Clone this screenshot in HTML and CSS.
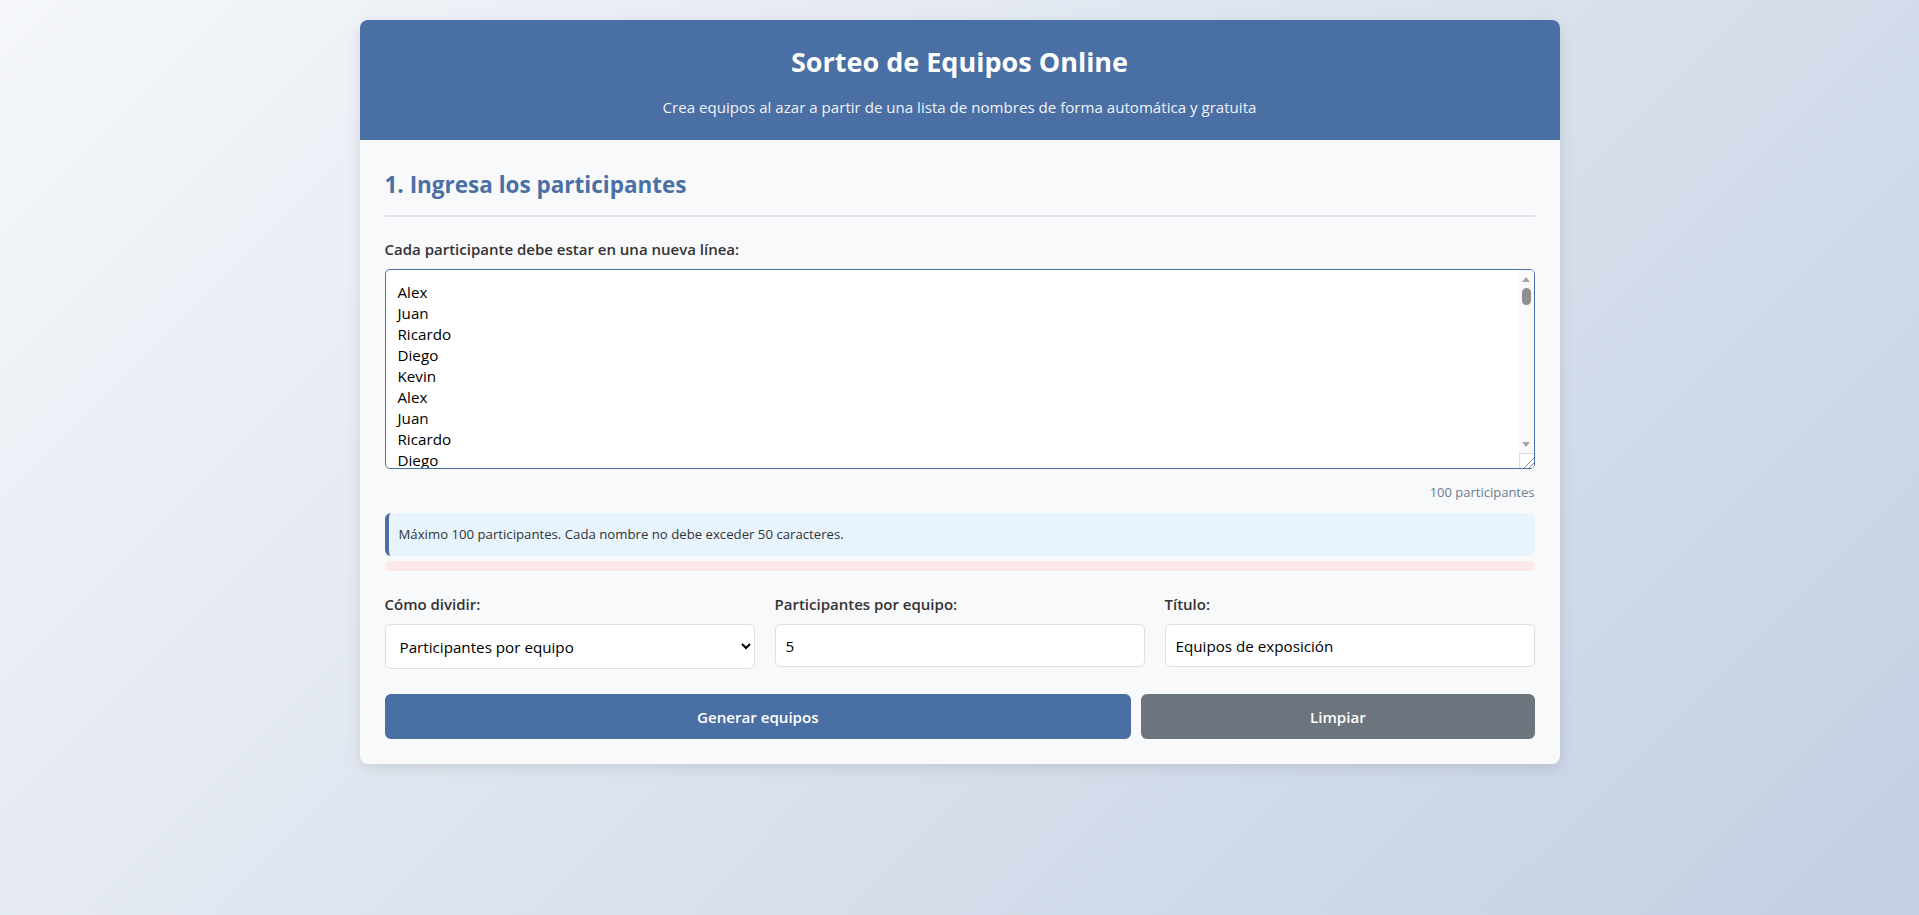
FILE: index.html
```html
<!DOCTYPE html>
<html lang="es">
<head>
<meta charset="utf-8">
<title>Sorteo de Equipos Online</title>
<link rel="stylesheet" href="styles.css">
</head>
<body>
<div class="container">
  <header class="header">
    <h1 class="title">Sorteo de Equipos Online</h1>
    <p class="subtitle">Crea equipos al azar a partir de una lista de nombres de forma automática y gratuita</p>
  </header>
  <main class="main">
    <h2 class="section-title">1. Ingresa los participantes</h2>
    <label class="field-label" for="names">Cada participante debe estar en una nueva línea:</label>
    <div class="names-wrap">
    <textarea id="names" class="names">Alex
Juan
Ricardo
Diego
Kevin
Alex
Juan
Ricardo
Diego
Kevin
Alex
Juan
Ricardo
Diego
Kevin
Alex
Juan
Ricardo
Diego
Kevin
Alex
Juan
Ricardo
Diego
Kevin
Alex
Juan
Ricardo
Diego
Kevin
Alex
Juan
Ricardo
Diego
Kevin
Alex
Juan
Ricardo
Diego
Kevin
Alex
Juan
Ricardo
Diego
Kevin
Alex
Juan
Ricardo
Diego
Kevin
Alex
Juan
Ricardo
Diego
Kevin
Alex
Juan
Ricardo
Diego
Kevin
Alex
Juan
Ricardo
Diego
Kevin
Alex
Juan
Ricardo
Diego
Kevin
Alex
Juan
Ricardo
Diego
Kevin
Alex
Juan
Ricardo
Diego
Kevin
Alex
Juan
Ricardo
Diego
Kevin
Alex
Juan
Ricardo
Diego
Kevin
Alex
Juan
Ricardo
Diego
Kevin
Alex
Juan
Ricardo
Diego
Kevin</textarea>
      <div class="scrollbar" aria-hidden="true">
        <div class="sb-btn"><span class="sb-arrow-up"></span></div>
        <div class="sb-thumb"></div>
        <div class="sb-space"></div>
        <div class="sb-btn"><span class="sb-arrow-down"></span></div>
        <div class="sb-corner"></div>
      </div>
    </div>
    <div class="count">100 participantes</div>
    <div class="info">Máximo 100 participantes. Cada nombre no debe exceder 50 caracteres.</div>
    <div class="error"></div>
    <div class="options">
      <div class="option">
        <label class="field-label" for="mode">Cómo dividir:</label>
        <select id="mode" class="control select">
          <option>Participantes por equipo</option>
          <option>Número de equipos</option>
        </select>
      </div>
      <div class="option">
        <label class="field-label" for="per">Participantes por equipo:</label>
        <input id="per" class="control" type="text" value="5">
      </div>
      <div class="option">
        <label class="field-label" for="ttl">Título:</label>
        <input id="ttl" class="control" type="text" value="Equipos de exposición">
      </div>
    </div>
    <div class="actions">
      <button class="btn btn-primary" type="button">Generar equipos</button>
      <button class="btn btn-secondary" type="button">Limpiar</button>
    </div>
  </main>
</div>
</body>
</html>
```
FILE: styles.css
```css
* { box-sizing: border-box; }

html, body { margin: 0; }

body {
  min-height: 100vh;
  padding: 20px;
  background: linear-gradient(135deg, #f5f7fa 0%, #c3cfe2 100%);
  font-family: "Open Sans", "Noto Sans", sans-serif;
  color: #333;
}

.container {
  max-width: 1200px;
  margin: 0 auto;
  background: #f8f9fa;
  border-radius: 8px;
  box-shadow: 0 4px 14px rgba(0, 0, 0, 0.1);
  overflow: hidden;
}

.header {
  background: #4a6fa5;
  color: #fff;
  text-align: center;
  height: 120px;
  padding: 23px 20px 0;
}

.title {
  margin: 0;
  font-size: 27px;
  line-height: 38px;
  font-weight: 700;
}

.subtitle {
  margin: 14px 0 0;
  font-size: 15.1px;
  line-height: 24px;
  opacity: 0.92;
}

.main {
  padding: 30px 25px 25px;
}

.section-title {
  margin: 0 0 22px;
  padding-bottom: 15px;
  border-bottom: 2px solid #dfe2e6;
  color: #4a6fa5;
  font-size: 22.5px;
  line-height: 30px;
  font-weight: 700;
}

.field-label {
  display: block;
  margin-bottom: 9px;
  font-size: 15px;
  line-height: 21px;
  font-weight: 600;
  color: #333;
}

.names-wrap {
  position: relative;
}

.names {
  display: block;
  width: 100%;
  height: 200px;
  padding: 12px 28px 12px 12px;
  border: 1px solid #4a6fa5;
  border-radius: 5px;
  background: #fff;
  font-family: inherit;
  font-size: 15.2px;
  line-height: 21px;
  color: #000;
  outline: none;
  overflow: hidden;
}

.scrollbar {
  position: absolute;
  top: 1px;
  right: 1px;
  bottom: 1px;
  width: 15px;
  display: flex;
  flex-direction: column;
  background: #fafafa;
  border-radius: 0 4px 4px 0;
  pointer-events: none;
}

.sb-btn {
  height: 15px;
  flex: none;
  display: flex;
  justify-content: center;
}

.sb-arrow-up {
  margin-top: 7px;
  width: 0;
  height: 0;
  border-left: 4px solid transparent;
  border-right: 4px solid transparent;
  border-bottom: 5px solid #a3a3a3;
}

.sb-arrow-down {
  margin-top: 4px;
  width: 0;
  height: 0;
  border-left: 4px solid transparent;
  border-right: 4px solid transparent;
  border-top: 5px solid #a3a3a3;
}

.sb-thumb {
  flex: none;
  align-self: center;
  margin-top: 3px;
  width: 9px;
  height: 17px;
  border-radius: 5px;
  background: #8f8f8f;
}

.sb-space { flex: 1; }

.sb-corner {
  flex: none;
  height: 15px;
  background:
    linear-gradient(135deg, transparent 62%, #8a8a8a 62%, #8a8a8a 67%, transparent 67%, transparent 80%, #8a8a8a 80%, #8a8a8a 85%, transparent 85%),
    #fff;
  border-top: 1px solid #dcdcdc;
  border-left: 1px solid #dcdcdc;
  border-bottom-right-radius: 4px;
}

.count {
  margin-top: 14px;
  text-align: right;
  font-size: 13px;
  line-height: 18px;
  color: #6b7c93;
}

.info {
  margin-top: 12px;
  padding: 12px 10px;
  background: #e7f3fd;
  border-left: 4px solid #4a6fa5;
  border-radius: 6px;
  font-size: 13.2px;
  line-height: 19px;
  color: #333;
}

.error {
  margin-top: 5px;
  height: 10px;
  background: #fde8e8;
  border-radius: 5px;
}

.options {
  margin-top: 23px;
  display: grid;
  grid-template-columns: repeat(3, 1fr);
  gap: 20px;
}

.control {
  display: block;
  width: 100%;
  height: 43px;
  padding: 10px;
  border: 1px solid #dcdfe3;
  border-radius: 6px;
  background: #fff;
  font-family: inherit;
  font-size: 15.2px;
  color: #000;
}

.select { height: 45px; }

.actions {
  margin-top: 25px;
  display: grid;
  grid-template-columns: 746fr 393fr;
  gap: 10px;
}

.btn {
  height: 45px;
  border: none;
  border-radius: 6px;
  color: #fff;
  font-family: inherit;
  font-size: 15.1px;
  font-weight: 600;
  cursor: pointer;
}

.btn-primary { background: #4a6fa5; }
.btn-secondary { background: #6c757d; }
```
